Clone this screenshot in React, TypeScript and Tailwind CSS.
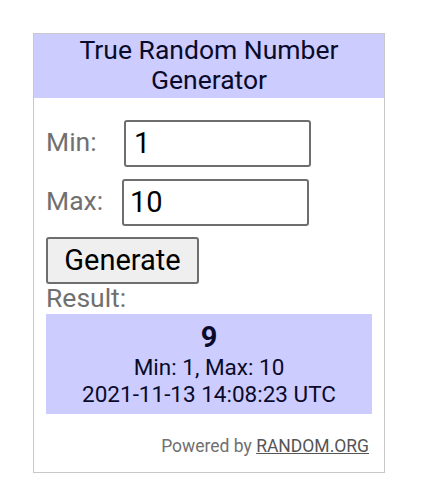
export default function App() {
  return (
    <div className="min-h-[495px] bg-white pl-[33px] pt-[33px] font-['Roboto',sans-serif]">
      <div className="w-[352px] h-[440px] border border-[#c8c8c8] bg-white">
        <div className="bg-[#ccccff] px-2 pt-[1px] pb-[3px] text-center text-[26.5px] leading-[30px] text-[#0a0a2a]">
          True Random Number
          <br />
          Generator
        </div>
        <div className="pl-[12px] pr-[12px]">
          <div className="mt-[22px] flex items-center">
            <span className="w-[78px] pb-[3px] text-[26.5px] text-[#707070]">Min:</span>
            <div className="flex h-[47px] w-[187px] items-center rounded-[3px] border-2 border-[#6e6e6e] px-[8px] text-[29px] text-black">
              1
            </div>
          </div>
          <div className="mt-[12px] flex items-center">
            <span className="w-[76px] pb-[3px] text-[26.5px] text-[#707070]">Max:</span>
            <div className="flex h-[47px] w-[187px] items-center rounded-[3px] border-2 border-[#6e6e6e] px-[6px] text-[29px] text-black">
              10
            </div>
          </div>
          <div className="mt-[11px]">
            <div className="flex h-[47px] w-[153px] items-center justify-center rounded-[3px] border-2 border-[#6e6e6e] bg-[#efefef] text-[29px] text-black">
              Generate
            </div>
          </div>
          <div className="text-[26.5px] leading-[28px] text-[#707070]">Result:</div>
          <div className="mt-[2px] flex h-[100px] w-[326px] flex-col items-center bg-[#ccccff] pt-[6px] text-[#0a0a2a]">
            <div className="text-[29px] font-bold leading-[34px]">9</div>
            <div className="text-[22.5px] leading-[27px]">Min: 1, Max: 10</div>
            <div className="text-[22.5px] leading-[27px]">2021-11-13 14:08:23 UTC</div>
          </div>
          <div className="mt-[19px] w-[323px] text-right text-[17.5px] text-[#707070]">
            Powered by <span className="text-[#555] underline">RANDOM.ORG</span>
          </div>
        </div>
      </div>
    </div>
  );
}
